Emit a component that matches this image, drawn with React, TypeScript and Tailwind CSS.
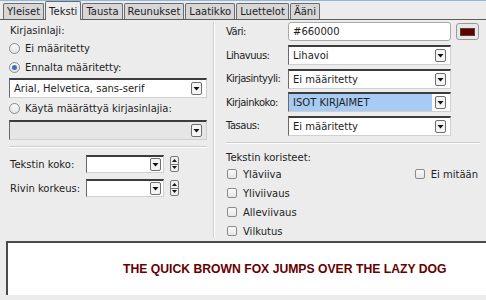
import type { ReactNode } from "react";

const tabs = ["Yleiset", "Teksti", "Tausta", "Reunukset", "Laatikko", "Luettelot", "Ääni"];

function DropButton() {
  return (
    <span className="flex h-[13px] w-[11px] shrink-0 items-center justify-center rounded-[2px] border border-[#6e6e6e] bg-[#f4f4f4]">
      <svg width="7" height="5" viewBox="0 0 7 5">
        <path d="M0.5 1h6L3.5 4.5z" fill="#111" />
      </svg>
    </span>
  );
}

function Select({ value, highlight, disabled, className }: { value?: string; highlight?: boolean; disabled?: boolean; className?: string }) {
  return (
    <div
      className={
        "flex h-[20px] items-center border-t-2 border-l border-t-[#3c3c3c] border-l-[#6a6a6a] border-r border-b border-r-[#d0d0d0] border-b-[#d0d0d0] pr-[4px] " +
        (disabled ? "bg-[#e6e6e6] " : "bg-white ") +
        (className ?? "")
      }
    >
      <div className={"flex h-full flex-1 items-center truncate pl-[4px] " + (highlight ? "mr-[3px] bg-[#a7cbf3]" : "")}>{value}</div>
      <DropButton />
    </div>
  );
}

function Radio({ checked, children }: { checked?: boolean; children: ReactNode }) {
  return (
    <div className="flex h-[19px] items-center gap-[5px]">
      <span className="flex h-[11px] w-[11px] items-center justify-center rounded-full border border-[#8a8a8a] bg-gradient-to-b from-[#fafafa] to-[#e4e4e4]">
        {checked && <span className="h-[5px] w-[5px] rounded-full bg-[#3d6fb0]" />}
      </span>
      <span>{children}</span>
    </div>
  );
}

function Check({ children }: { children: ReactNode }) {
  return (
    <div className="flex h-[19px] items-center gap-[6px]">
      <span className="h-[10px] w-[10px] rounded-[2px] border border-[#8a8a8a] bg-gradient-to-b from-[#fafafa] to-[#e6e6e6]" />
      <span>{children}</span>
    </div>
  );
}

function Spin() {
  return (
    <div className="ml-[6px] flex h-[16px] w-[9px] flex-col overflow-hidden rounded-[2px] border border-[#7a7a7a] bg-[#f0f0f0]">
      <div className="flex flex-1 items-center justify-center border-b border-[#7a7a7a]">
        <svg width="5" height="3" viewBox="0 0 5 3"><path d="M0 3h5L2.5 0z" fill="#111" /></svg>
      </div>
      <div className="flex flex-1 items-center justify-center">
        <svg width="5" height="3" viewBox="0 0 5 3"><path d="M0 0h5L2.5 3z" fill="#111" /></svg>
      </div>
    </div>
  );
}

function SizeRow({ label }: { label: string }) {
  return (
    <div className="flex h-[24px] items-center">
      <span className="w-[76px]">{label}</span>
      <div className="flex h-[18px] w-[78px] items-center border-t-2 border-l border-t-[#3c3c3c] border-l-[#6a6a6a] border-r border-b border-r-[#d0d0d0] border-b-[#d0d0d0] bg-white pr-[2px]">
        <div className="flex-1" />
        <DropButton />
      </div>
      <Spin />
    </div>
  );
}

function FieldRow({ label, children }: { label: string; children: ReactNode }) {
  return (
    <div className="flex h-[23.5px] items-center">
      <span className="w-[62px] whitespace-nowrap tracking-[-0.5px]">{label}</span>
      {children}
    </div>
  );
}

export default function App() {
  return (
    <div className="h-[300px] w-[486px] overflow-hidden bg-[#ececec] font-['DejaVu_Sans',sans-serif] text-[10px] text-[#1e1e1e]">
      <div className="h-px bg-[#8db6e3]" />
      <div className="flex h-[19px] items-end border-b border-[#5c5c5c] pl-[3px]">
        {tabs.map((t) => {
          const active = t === "Teksti";
          return (
            <div
              key={t}
              className={
                "mr-[1px] flex items-center rounded-t-[2px] border border-b-0 border-[#6c6c6c] px-[3px] text-[10px] " +
                (active ? "relative top-px h-[19px] bg-[#ececec]" : "h-[16px] bg-[#d7d7d7]")
              }
            >
              {t}
            </div>
          );
        })}
      </div>

      <div className="flex h-[220px]">
        <div className="w-[213px] pl-[9px] pr-[6px] pt-[2px]">
          <div className="flex h-[17px] items-center pl-px">Kirjasinlaji:</div>
          <Radio>Ei määritetty</Radio>
          <Radio checked>Ennalta määritetty:</Radio>
          <Select value="Arial, Helvetica, sans-serif" className="mt-[1px]" />
          <div className="mt-[1px]">
            <Radio>Käytä määrättyä kirjasinlajia:</Radio>
          </div>
          <Select disabled className="mt-[2px]" />
          <div className="mt-[6px] border-t border-[#cfcfcf] border-b border-b-white" />
          <div className="mt-[4px] pl-px">
            <SizeRow label="Tekstin koko:" />
            <SizeRow label="Rivin korkeus:" />
          </div>
        </div>

        <div className="my-[2px] w-[2px] border-l border-[#cfcfcf] border-r border-r-white" />

        <div className="flex-1 pl-[11px] pr-[3px]">
          <FieldRow label="Väri:">
            <div className="flex h-[19px] w-[163px] items-center rounded-[3px] border border-[#a8a8a8] bg-white pl-[4px]">#660000</div>
            <div className="ml-[5px] flex h-[17px] w-[23px] items-center justify-center rounded-[3px] border border-[#9a9a9a] bg-[#e8e8e8]">
              <span className="h-[8px] w-[15px] border border-[#444] bg-[#660000]" />
            </div>
          </FieldRow>
          <FieldRow label="Lihavuus:"><Select value="Lihavoi" className="w-[163px]" /></FieldRow>
          <FieldRow label="Kirjasintyyli:"><Select value="Ei määritetty" className="w-[163px]" /></FieldRow>
          <FieldRow label="Kirjainkoko:"><Select value="ISOT KIRJAIMET" highlight className="w-[163px]" /></FieldRow>
          <FieldRow label="Tasaus:"><Select value="Ei määritetty" className="w-[163px]" /></FieldRow>
          <div className="mt-[4px] mr-[3px] border-t border-[#cfcfcf] border-b border-b-white" />
          <div className="mt-[7px] flex h-[14px] items-center">Tekstin koristeet:</div>
          <div className="flex pl-[1px]">
            <div className="flex-1">
              <Check>Yläviiva</Check>
              <Check>Yliviivaus</Check>
              <Check>Alleviivaus</Check>
              <Check>Vilkutus</Check>
            </div>
            <div className="pr-[5px]">
              <Check>Ei mitään</Check>
            </div>
          </div>
        </div>
      </div>

      <div className="ml-[6px] mt-[1px] flex h-[54px] items-center border-t-2 border-l-2 border-[#4a4a4a] bg-white pl-[115px] font-['Liberation_Sans',Arial,sans-serif] text-[12.2px] font-bold text-[#660000]">
        THE QUICK BROWN FOX JUMPS OVER THE LAZY DOG
      </div>
    </div>
  );
}
